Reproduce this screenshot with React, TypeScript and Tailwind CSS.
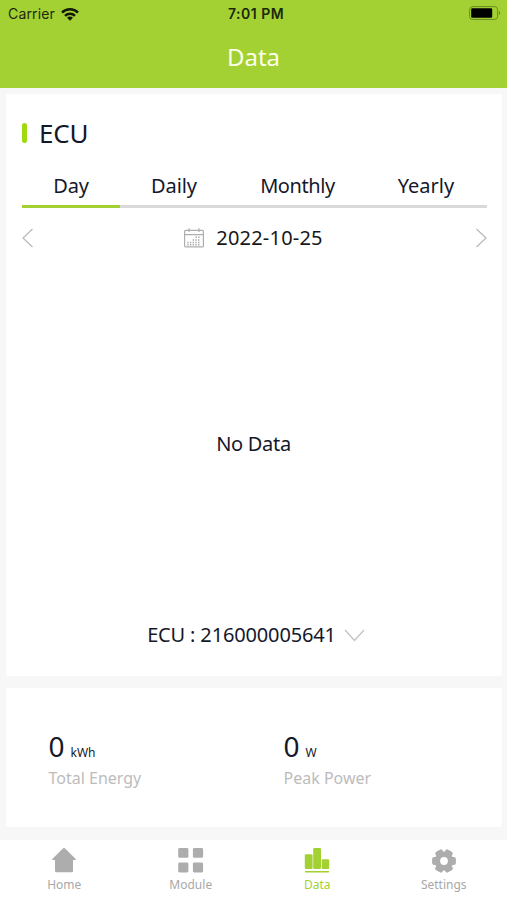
const tabs = [
  { label: "Day", width: "w-[98px]", spacing: "tracking-[-0.2px]" },
  { label: "Daily", width: "w-[108px]", spacing: "tracking-[-0.1px]" },
  { label: "Monthly", width: "w-[139px]", spacing: "tracking-[-0.4px]" },
  { label: "Yearly", width: "w-[118px]", spacing: "tracking-[0px]" },
];

const stats = [
  { value: "0", unit: "kWh", label: "Total Energy" },
  { value: "0", unit: "W", label: "Peak Power" },
];

function WifiIcon() {
  return (
    <svg width="18" height="13" viewBox="0 0 18 13" fill="none" stroke="#111a08" strokeWidth="2.5">
      <path d="M1 4.6a11.4 11.4 0 0 1 16 0" />
      <path d="M4 7.8a7.2 7.2 0 0 1 10 0" />
      <path d="M9 12.7 6 9.8a4.2 4.2 0 0 1 6 0Z" fill="#111a08" stroke="none" />
    </svg>
  );
}

function BatteryIcon() {
  return (
    <svg width="32" height="14" viewBox="0 0 32 14">
      <rect x="0.6" y="0.6" width="28" height="12.8" rx="3" fill="none" stroke="#6a8a22" />
      <rect x="2.2" y="2.3" width="21" height="9.4" rx="1.2" fill="#000" />
      <path d="M30 5v4c1.6-.5 1.6-3.5 0-4Z" fill="#6a8a22" />
    </svg>
  );
}

function CalendarIcon() {
  return (
    <svg width="20" height="20" viewBox="0 0 20 20" fill="none" stroke="#aeaeae" strokeWidth="1.2">
      <rect x="0.6" y="2.3" width="18.8" height="16.6" rx="1" />
      <path d="M0.6 6.7h18.8M5 0.3v3.6M15 0.3v3.6" />
      <path d="M11.4 9.3h5.4M8.6 12h8.2M3.2 14.4h13.6M3.2 16.8h13.6" strokeWidth="1.5" strokeDasharray="1.5 1.2" />
    </svg>
  );
}

function HomeIcon() {
  return (
    <svg width="26" height="26" viewBox="0 0 26 26" fill="#adadad">
      <path d="M12.2 1.3a1.2 1.2 0 0 1 1.6 0l10.7 10.4c.7.8.3 1.4-.5 1.4h-2v11c0 .8-.5 1.2-1.2 1.2H5.2c-.7 0-1.2-.4-1.2-1.2v-11H2c-.8 0-1.2-.6-.5-1.4Z" />
    </svg>
  );
}

function ModuleIcon() {
  return (
    <svg width="26" height="26" viewBox="0 0 26 26" fill="#adadad">
      <rect x="0.2" y="1" width="10.2" height="9.8" rx="1.4" />
      <rect x="14.9" y="1" width="10.2" height="9.8" rx="1.4" />
      <rect x="0.2" y="15.6" width="10.2" height="9.8" rx="1.4" />
      <rect x="14.9" y="15.6" width="10.2" height="9.8" rx="1.4" />
    </svg>
  );
}

function DataIcon() {
  return (
    <svg width="26" height="26" viewBox="0 0 26 26" fill="#a3d133">
      <rect x="0.8" y="7.2" width="7.8" height="14.8" rx="1.2" />
      <rect x="9.2" y="1" width="7.8" height="21" rx="1.2" />
      <rect x="17.7" y="12.2" width="7.5" height="9.8" rx="1.2" />
      <rect x="0.8" y="24" width="24.4" height="1.4" rx="0.7" />
    </svg>
  );
}

const teeth = [30, 90, 150, 210, 270, 330];

function SettingsIcon() {
  return (
    <svg width="26" height="26" viewBox="0 0 26 26">
      <g fill="#adadad">
        <circle cx="13" cy="14" r="9.4" />
        {teeth.map((angle) => (
          <rect key={angle} x="8.9" y="2.1" width="8.2" height="8" rx="2" transform={`rotate(${angle} 13 14)`} />
        ))}
      </g>
      <circle cx="13" cy="14" r="3.9" fill="#fff" />
    </svg>
  );
}

const navItems = [
  { label: "Home", icon: HomeIcon, active: false },
  { label: "Module", icon: ModuleIcon, active: false },
  { label: "Data", icon: DataIcon, active: true },
  { label: "Settings", icon: SettingsIcon, active: false },
];

export default function App() {
  return (
    <div className="flex h-[900px] w-[507px] flex-col overflow-hidden bg-[#f7f7f7] font-['Noto_Sans',sans-serif] text-[#15182b]">
      <header className="h-[88px] shrink-0 bg-[#a3d133]">
        <div className="grid h-7 grid-cols-3 items-center pl-2 pr-1.5 font-[Inter,sans-serif] text-sm text-[#1b280b]">
          <div className="flex items-center gap-1.5">
            <span className="tracking-[0.15px]">Carrier</span>
            <WifiIcon />
          </div>
          <span className="pl-[3px] text-center font-semibold tracking-[0.5px]">7:01 PM</span>
          <div className="flex justify-end pb-0.5">
            <BatteryIcon />
          </div>
        </div>
        <h1 className="text-center text-2xl leading-[58px] text-[#fbffe9]">Data</h1>
      </header>

      <main className="flex flex-col gap-3 px-1.5 pt-1.5">
        <section className="flex h-[582px] w-[496px] flex-col rounded-xs bg-white pl-4 pr-[15px]">
          <div className="mt-[21px] flex h-9 items-center gap-3">
            <span className="h-5 w-[5px] rounded-full bg-[#a0d911]" />
            <h2 className="text-[26px] tracking-[-0.2px]">ECU</h2>
          </div>
          <div className="mt-[17px] flex h-[40px] border-b-[3px] border-[#d9d9d9]">
            {tabs.map((tab, i) => (
              <button
                key={tab.label}
                className={`${tab.width} ${tab.spacing} h-10 shrink-0 border-b-[3px] pb-px text-center text-xl ${i === 0 ? "border-[#a3d133]" : "border-transparent"}`}
              >
                {tab.label}
              </button>
            ))}
          </div>
          <div className="flex h-[59px] items-center justify-between">
            <svg width="12" height="20" viewBox="0 0 12 20" fill="none" stroke="#b8b8b8" strokeWidth="1.2">
              <path d="M10.5 1 1 10l9.5 9" />
            </svg>
            <div className="flex items-center gap-3 pr-0.5">
              <CalendarIcon />
              <span className="text-[20px] tracking-[0.2px] text-[#181818]">2022-10-25</span>
            </div>
            <svg width="12" height="20" viewBox="0 0 12 20" fill="none" stroke="#b8b8b8" strokeWidth="1.2">
              <path d="m1.5 1 9.5 9-9.5 9" />
            </svg>
          </div>
          <div className="flex h-[354px] items-center justify-center pr-[2px] text-[20px] tracking-[-0.3px]">No Data</div>
          <div className="-mt-[2px] flex h-8 items-center justify-center gap-2 pl-[3px]">
            <span className="text-[20px] tracking-[-0.15px]">ECU : 216000005641</span>
            <svg width="21" height="13" viewBox="0 0 21 13" fill="none" stroke="#c2c2c2" strokeWidth="1.2">
              <path d="m1 1 9.5 10.5L20 1" />
            </svg>
          </div>
        </section>

        <section className="grid h-[139px] w-[496px] grid-cols-[235px_1fr] rounded-xs bg-white pl-[42.5px] pt-[41px]">
          {stats.map((stat) => (
            <div key={stat.label}>
              <div className="flex h-[34px] items-baseline gap-1.5">
                <span className="text-[28px] leading-[34px]">{stat.value}</span>
                <span className="text-xs">{stat.unit}</span>
              </div>
              <div className="mt-[3px] text-base text-[#bcbcbc]">{stat.label}</div>
            </div>
          ))}
        </section>
      </main>

      <nav className="mt-[13px] grid h-[60px] shrink-0 grid-cols-4 bg-white pl-px pt-[7px]">
        {navItems.map(({ label, icon: Icon, active }) => (
          <button
            key={label}
            className={`flex flex-col items-center text-xs ${active ? "text-[#a3d133]" : "text-[#a8a8a8]"}`}
          >
            <Icon />
            <span className="mt-1">{label}</span>
          </button>
        ))}
      </nav>
    </div>
  );
}
